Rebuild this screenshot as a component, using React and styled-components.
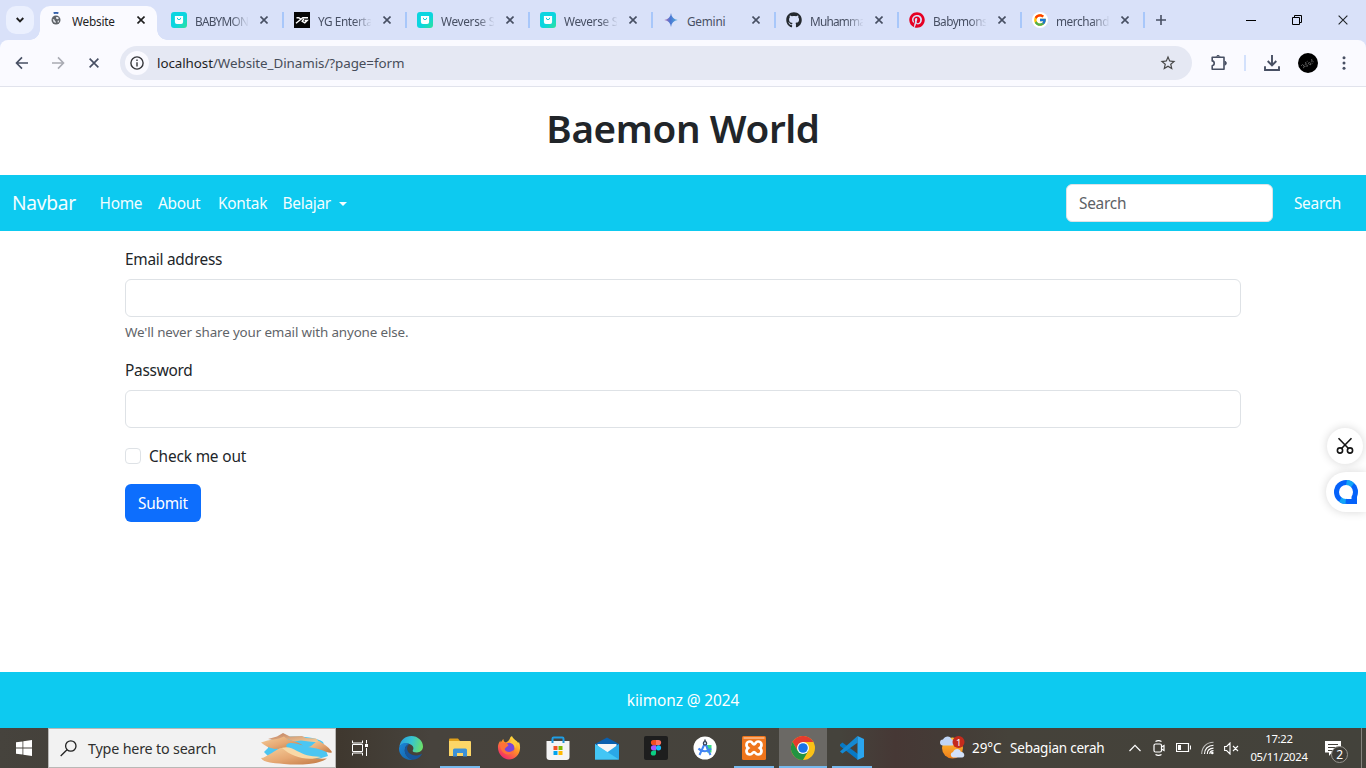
import React from "react";
import styled, { createGlobalStyle, css } from "styled-components";
import { FaGithub, FaPinterest } from "react-icons/fa";
import { FcGoogle } from "react-icons/fc";
import { MdStarBorder } from "react-icons/md";

const GlobalStyle = createGlobalStyle`
  *, *::before, *::after { box-sizing: border-box; }
  html, body { margin: 0; padding: 0; overflow: hidden; background: #fff; }
  body { font-family: "Noto Sans", "Open Sans", sans-serif; font-size: 15.4px; letter-spacing: -0.26px; color: #212529; }
  button, input { font-family: inherit; letter-spacing: inherit; }
  svg { display: block; flex: none; }
`;

const Screen = styled.div`
  width: 1366px;
  height: 768px;
  display: flex;
  flex-direction: column;
  overflow: hidden;
`;

/* ---------- Browser: tab strip ---------- */

const TabStrip = styled.div`
  height: 40px;
  flex: none;
  display: flex;
  background: #d9e1f9;
`;

const TabSearch = styled.button`
  width: 28px;
  height: 28px;
  margin: 6px;
  padding: 0;
  border: 0;
  border-radius: 10px;
  background: #ebf0fe;
  display: flex;
  align-items: center;
  justify-content: center;
`;

const Tab = styled.div`
  position: relative;
  width: 123px;
  height: 40px;
  flex: none;
  display: flex;
  align-items: center;
  padding-left: 8px;
  color: ${(p) => (p.$active ? "#1f1f1f" : "#474f63")};
  isolation: isolate;
  ${(p) =>
    p.$active
      ? css`
          &::before {
            content: "";
            position: absolute;
            z-index: -1;
            left: 0;
            top: 6px;
            width: 117px;
            height: 34px;
            border-radius: 10px 10px 0 0;
            background: #fafaff;
          }
          &::after {
            content: "";
            position: absolute;
            z-index: -1;
            left: -10px;
            bottom: 0;
            width: 137px;
            height: 10px;
            background:
              radial-gradient(circle at 0 0, transparent 9.5px, #fafaff 10px) left / 10px 10px no-repeat,
              radial-gradient(circle at 100% 0, transparent 9.5px, #fafaff 10px) right / 10px 10px no-repeat;
          }
        `
      : css`
          &::after {
            content: "";
            position: absolute;
            left: 119px;
            top: 12px;
            width: 2px;
            height: 16px;
            background: #a8c7fa;
          }
        `}
`;

const Favicon = styled.span`
  width: 16px;
  height: 16px;
  flex: none;
  margin-right: 8px;
`;

const TabTitle = styled.span`
  width: 53px;
  padding-top: 1px;
  font-size: 11.8px;
  line-height: 16px;
  letter-spacing: ${(p) => p.$spacing ?? -0.22}px;
  white-space: nowrap;
  overflow: hidden;
  mask-image: ${(p) => (p.$fade ? "linear-gradient(to right, #000 36px, transparent 54px)" : "none")};
`;

const TabClose = styled.span`
  width: 16px;
  height: 16px;
  margin-left: 8px;
  display: flex;
  align-items: center;
  justify-content: center;
`;

const NewTab = styled.span`
  width: 28px;
  display: flex;
  align-items: center;
  justify-content: center;
  color: #474f63;
`;

const WindowButtons = styled.div`
  margin-left: auto;
  display: flex;
`;

const WindowButton = styled.span`
  width: 46px;
  display: flex;
  align-items: center;
  justify-content: center;
`;

/* ---------- Browser: address row ---------- */

const AddressRowBack = styled.div`
  background: #d9e1f9;
  flex: none;
`;

const AddressRow = styled.div`
  height: 47px;
  display: flex;
  align-items: center;
  border-radius: 8px 8px 0 0;
  background: #fafaff;
  border-bottom: 1px solid #e1e3ec;
  padding: 0 4px;
`;

const NavIcon = styled.span`
  width: 36px;
  height: 34px;
  display: flex;
  align-items: center;
  justify-content: center;
  color: ${(p) => (p.$muted ? "#a9abb3" : "#474f63")};
`;

const Omnibox = styled.div`
  width: 1072px;
  height: 34px;
  margin-left: 8px;
  padding: 0 15px 0 5px;
  border-radius: 17px;
  background: #e5e8f3;
  display: flex;
  align-items: center;
  color: #474747;
`;

const SiteInfo = styled.span`
  width: 24px;
  height: 24px;
  border-radius: 50%;
  background: #fafaff;
  margin-right: 8px;
  display: flex;
  align-items: center;
  justify-content: center;
`;

const Url = styled.span`
  flex: 1;
  font-size: 13.4px;
  line-height: 20px;
  letter-spacing: -0.07px;
  color: #474d59;
  b {
    font-weight: 400;
    color: #1f1f1f;
  }
`;

const ToolbarIcons = styled.div`
  display: flex;
  align-items: center;
  margin-left: 8px;
`;

const ToolbarDivider = styled.span`
  width: 2px;
  height: 16px;
  margin: 0 8px;
  background: #d3e1fc;
`;

/* ---------- Page ---------- */

const Page = styled.main`
  height: 641px;
  flex: none;
  display: flex;
  flex-direction: column;
  background: #fff;
`;

const SiteHeader = styled.header`
  height: 88px;
  padding-top: 17px;
  text-align: center;
`;

const SiteTitle = styled.h1`
  margin: 0;
  font-size: 38.6px;
  line-height: 48px;
  font-weight: 560;
  letter-spacing: -0.36px;
`;

const Navbar = styled.nav`
  height: 56px;
  display: flex;
  align-items: center;
  padding: 0 12px;
  background: #0dcaf0;
  color: #f4fdff;
`;

const Brand = styled.a`
  width: 87.5px;
  font-size: 19.2px;
  line-height: 30px;
`;

const NavLink = styled.a`
  width: ${(p) => p.$width}px;
  flex: none;
  display: flex;
  align-items: center;
  gap: 8px;
  padding-top: 2px;
  line-height: 24px;
  white-space: nowrap;
`;

const Caret = styled.span`
  border: 4.5px solid transparent;
  border-top-color: currentColor;
  border-bottom: 0;
`;

const SearchForm = styled.div`
  margin-left: auto;
  display: flex;
  align-items: center;
`;

const SearchInput = styled.input`
  width: 207px;
  height: 38px;
  padding: 6px 12px;
  border: 1px solid #dee2e6;
  border-radius: 6px;
  background: #fff;
  font-size: 15.4px;
  &::placeholder {
    color: #5c6166;
    opacity: 1;
  }
`;

const SearchButton = styled.button`
  width: 65px;
  margin-left: 12px;
  margin-right: 4px;
  padding: 2px 0 0;
  border: 0;
  background: none;
  color: #f4fdff;
  font-size: 15.4px;
  line-height: 24px;
`;

const Form = styled.form`
  width: 1116px;
  margin: 17px auto 0;
  display: flex;
  flex-direction: column;
`;

const FieldLabel = styled.label`
  line-height: 24px;
  margin-bottom: 7px;
`;

const Field = styled.input`
  height: 38px;
  border: 1px solid #dee2e6;
  border-radius: 6px;
  padding: 6px 12px;
  background: #fff;
`;

const Hint = styled.div`
  margin: 5px 0 16px;
  font-size: 13.4px;
  letter-spacing: -0.14px;
  line-height: 21px;
  color: #5f6469;
`;

const CheckRow = styled.label`
  display: flex;
  align-items: center;
  gap: 8px;
  margin: 16px 0;
  height: 24px;
  line-height: 24px;
  letter-spacing: -0.15px;
  span {
    padding-top: 2px;
  }
`;

const Checkbox = styled.input`
  appearance: none;
  width: 16px;
  height: 16px;
  margin: 0;
  border: 1px solid #dee2e6;
  border-radius: 4px;
`;

const Submit = styled.button`
  align-self: flex-start;
  width: 76px;
  height: 38px;
  padding: 0;
  border: 0;
  border-radius: 6px;
  background: #0d6efd;
  color: #fff;
  font-size: 15.4px;
`;

const SiteFooter = styled.footer`
  height: 56px;
  margin-top: auto;
  background: #0dcaf0;
  color: #fff;
  padding-top: 1px;
  line-height: 56px;
  text-align: center;
  letter-spacing: -0.1px;
`;

/* ---------- Floating extension buttons ---------- */

const FloatingTools = styled.div`
  position: absolute;
  right: 0;
  top: 428px;
  display: flex;
  flex-direction: column;
  align-items: flex-end;
  gap: 8px;
`;

const FloatingButton = styled.div`
  width: ${(p) => (p.$docked ? 40 : 36)}px;
  height: ${(p) => (p.$docked ? 40 : 36)}px;
  margin-right: ${(p) => (p.$docked ? 0 : 3)}px;
  border-radius: ${(p) => (p.$docked ? "20px 0 0 20px" : "50%")};
  background: #fff;
  box-shadow: 0 0 10px rgba(0, 0, 0, 0.16);
  display: flex;
  align-items: center;
  justify-content: center;
`;

/* ---------- Taskbar ---------- */

const Taskbar = styled.div`
  height: 40px;
  flex: none;
  display: flex;
  background: linear-gradient(90deg, #46433d 0, #3f382f 340px, #47433d 430px, #45433c 840px, #463835 895px, #443b36 940px, #45423a 1010px, #43423b 100%);
  color: #fff;
`;

const TaskButton = styled.div`
  width: ${(p) => p.$width || 49}px;
  flex: none;
  position: relative;
  display: flex;
  align-items: center;
  justify-content: center;
`;

const AppButton = styled(TaskButton)`
  background: ${(p) =>
    p.$active ? "linear-gradient(#6b6965, #6b6965) center / 48px 100% no-repeat" : "none"};
  &::after {
    content: "";
    display: ${(p) => (p.$running ? "block" : "none")};
    position: absolute;
    bottom: 0;
    left: ${(p) => (p.$active ? 0.5 : 4.5)}px;
    right: ${(p) => (p.$active ? 0.5 : 4.5)}px;
    height: 2px;
    background: #76b9ed;
  }
`;

const TaskSearch = styled.div`
  width: 288px;
  flex: none;
  padding: 1px 3px 0 11px;
  border: 1px solid #b9b8b6;
  background: #f2f2f2;
  color: #30302f;
  display: flex;
  align-items: center;
  font-size: 14.3px;
  letter-spacing: -0.18px;
  gap: 11px;
  span {
    flex: 1;
    line-height: 20px;
  }
`;

const AppRow = styled.div`
  display: flex;
  margin-left: 2.5px;
`;

const Weather = styled.div`
  display: flex;
  align-items: center;
  margin-left: auto;
  font-size: 13.5px;
  white-space: nowrap;
`;

const Temperature = styled.span`
  width: 38px;
  margin-left: 6px;
  letter-spacing: -0.1px;
`;

const Condition = styled.span`
  width: 113px;
  letter-spacing: -0.22px;
`;

const TrayIcon = styled.div`
  width: 24.2px;
  flex: none;
  display: flex;
  align-items: center;
  justify-content: center;
`;

const Clock = styled.div`
  width: 70px;
  display: flex;
  flex-direction: column;
  align-items: center;
  justify-content: center;
  font-size: 11.3px;
  line-height: 18px;
  letter-spacing: -0.3px;
  padding-bottom: 1px;
`;

const Notifications = styled.div`
  width: 47px;
  padding-right: 9px;
  display: flex;
  align-items: center;
  justify-content: center;
  position: relative;
`;

const Count = styled.span`
  position: absolute;
  left: 17px;
  top: 18px;
  width: 17px;
  height: 17px;
  border-radius: 50%;
  border: 1px solid #97958f;
  background: #3d3b36;
  font-size: 12px;
  line-height: 15px;
  text-align: center;
`;

const ShowDesktop = styled.div`
  width: 5px;
  border-left: 1px solid #85837e;
`;

/* ---------- Icons ---------- */

const Cross = ({ size = 8, stroke = 1.6 }) => (
  <svg width={size} height={size} viewBox="0 0 8 8" fill="none" stroke="currentColor" strokeWidth={stroke}>
    <path d="M.5.5l7 7M7.5.5l-7 7" />
  </svg>
);

const GlobeLoading = () => (
  <svg width="16" height="16" viewBox="0 0 16 16">
    <path d="M5.600 1.300Q8 .2 10.400 1.300" stroke="#2f5ca8" strokeWidth="1.800" fill="none" />
    <circle cx="8" cy="8" r="4.500" fill="#5f6368" />
    <path d="M4.600 6.800l2 .9.300 1.200 1 .8-.3 1.400-2-1zM8 5l2 .1.900 1.300-1.300.8-1.400-.5zM9.600 8.800l1.600-.4-.4 1.700-1 .7z" fill="#e4e6ec" />
  </svg>
);

const WeverseShop = () => (
  <svg width="16" height="16" viewBox="0 0 16 16">
    <defs>
      <linearGradient id="weverse" x1="0" y1="0" x2="1" y2="1">
        <stop offset=".55" stopColor="#0cd5e0" />
        <stop offset="1" stopColor="#2fe39a" />
      </linearGradient>
    </defs>
    <rect width="16" height="16" rx="3" fill="url(#weverse)" />
    <path d="M3.900 4h8.200v6a2 2 0 0 1-2 2H5.900a2 2 0 0 1-2-2z" fill="#fff" />
    <path d="M6.300 5.800a1.700 1.900 0 0 0 3.400 0" fill="none" stroke="#12cfdc" strokeWidth="1" />
  </svg>
);

const YgLogo = () => (
  <svg width="16" height="16" viewBox="0 0 16 16">
    <rect width="16" height="16" fill="#050505" />
    <path d="M2.500 5.800h2.300l2.300 1.600M2 11.200l6.800-5.400H14M9.800 7L8.200 9.300l2.600 1.500 2.400-2.300h-2.600" fill="none" stroke="#fff" strokeWidth="1.400" />
  </svg>
);

const GeminiStar = () => (
  <svg width="16" height="16" viewBox="0 0 16 16">
    <defs>
      <linearGradient id="gemini" x1="0" y1="0" x2="1" y2="0">
        <stop stopColor="#b56fae" />
        <stop offset=".45" stopColor="#4a76d4" />
        <stop offset="1" stopColor="#55afd8" />
      </linearGradient>
    </defs>
    <path d="M8 1c.5 4 2.700 6.300 6.800 7-4.100.7-6.300 3-6.800 7-.5-4-2.700-6.300-6.800-7C5.300 7.300 7.500 5 8 1z" fill="url(#gemini)" />
  </svg>
);

const GoogleIcon = () => (
  <svg width="16" height="16" viewBox="0 0 16 16">
    <circle cx="8" cy="8" r="8" fill="#fff" />
    <FcGoogle x="1" y="1" size={14} />
  </svg>
);

const Arrow = ({ flip }) => (
  <svg width="14" height="14" viewBox="0 0 14 14" fill="none" stroke="currentColor" strokeWidth="1.600">
    <path d={flip ? "M1 7h11M7 1.400L12.500 7 7 12.600" : "M13 7H2M7 1.400L1.500 7 7 12.600"} />
  </svg>
);

const InfoIcon = () => (
  <svg width="14" height="14" viewBox="0 0 14 14" fill="none" stroke="#35363a" strokeWidth="1.400">
    <circle cx="7" cy="7" r="6.100" />
    <path d="M7 6.200v4.200M7 3.600V5" />
  </svg>
);

const PuzzleIcon = () => (
  <svg width="18" height="18" viewBox="0 0 18 18" fill="none" stroke="currentColor" strokeWidth="1.600" strokeLinejoin="round">
    <path d="M3.200 3.200H15v12H3.200v-3.500c2.700-.4 2.700-4.400 0-4.800z" />
    <path d="M7.300 2.500a1.900 1.500 0 0 1 3.600 0M15.700 7.300a1.600 1.900 0 0 1 0 3.800" fill="currentColor" strokeWidth="1" />
  </svg>
);

const DownloadIcon = () => (
  <svg width="16" height="16" viewBox="0 0 16 16" fill="none" stroke="currentColor" strokeWidth="1.900">
    <path d="M8 0v10M3.700 6L8 10.300 12.300 6M1 11.200V15h14v-3.800" />
  </svg>
);

const ProfilePicture = () => (
  <svg width="20" height="20" viewBox="0 0 20 20">
    <circle cx="10" cy="10" r="10" fill="#000" />
    <path d="M3 13l2-2 1 3 2-4 1 4 2-5 1 3 2-5 2 3M5 15l3-2M7 10l3-2M12 12l3-2M13 7l2-1" fill="none" stroke="#888" strokeWidth=".8" strokeDasharray="1 1" />
  </svg>
);

const DotsIcon = () => (
  <svg width="4" height="14" viewBox="0 0 4 14" fill="currentColor">
    <circle cx="2" cy="1.700" r="1.500" />
    <circle cx="2" cy="7" r="1.500" />
    <circle cx="2" cy="12.300" r="1.500" />
  </svg>
);

const ScissorsIcon = () => (
  <svg width="18" height="18" viewBox="0 0 18 18" fill="none" stroke="#161616" strokeWidth="1.600">
    <circle cx="4" cy="13.500" r="2.600" />
    <circle cx="14" cy="13.500" r="2.600" />
    <path d="M2.500 1.200l10 10.300M15.500 1.200l-10 10.300" />
  </svg>
);

const AssistantIcon = () => (
  <svg width="26" height="26" viewBox="0 0 26 26">
    <path d="M14 13h10v12H14z" fill="#0562fa" />
    <circle cx="13" cy="13" r="12" fill="#0562fa" />
    <path d="M14 1q5 .3 7 3.300l-3.500 4.700L13 6z" fill="#12a5f7" />
    <path d="M6 22.800q3 2.200 6.500 2.200l.5-6-4-1z" fill="#12a5f7" />
    <circle cx="13" cy="13" r="7" fill="#fff" />
    <path d="M14 16h4.500v4H14z" fill="#fff" />
  </svg>
);

const WindowsIcon = () => (
  <svg width="16" height="16" viewBox="0 0 16 16" fill="#fff">
    <path d="M0 2.300L6.500 1.400v6.200H0zM7.300 1.300L16 0v7.600H7.300zM0 8.400h6.500v6.200L0 13.700zM7.300 8.400H16V16l-8.700-1.300z" />
  </svg>
);

const MagnifierIcon = () => (
  <svg width="17" height="17" viewBox="0 0 17 17" fill="none" stroke="#222" strokeWidth="1.300">
    <circle cx="10.800" cy="6" r="5.200" />
    <path d="M7 9.800L.7 16" />
  </svg>
);

const DunesIcon = () => (
  <svg width="72" height="34" viewBox="0 0 72 34">
    <defs>
      <linearGradient id="sand" x1="0" y1="0" x2="1" y2="1">
        <stop stopColor="#f6cf9b" />
        <stop offset=".5" stopColor="#e6a873" />
        <stop offset="1" stopColor="#bd753f" />
      </linearGradient>
      <linearGradient id="ridge" x1="0" y1="0" x2="1" y2="1">
        <stop stopColor="#c08062" />
        <stop offset="1" stopColor="#f7d29c" />
      </linearGradient>
    </defs>
    <path d="M9 9C20 3 52 3 63 10l5 14-16 5-42-3-6-6 4-4z" fill="#4cc6f2" />
    <path d="M8 7L17 4.500 23 1l7 3.500L42 4l4 2 10 .5 4 4-11-1-8-1-7 1-8-3-10 2z" fill="url(#ridge)" />
    <path d="M1 10.500c9-3.500 17-2.500 23-6 4 5 13 4 19 9-6-2-10-3-15-2-5 3 3 5-3 6.500-5 1.500-4-2-10-1C9 16 5 14 1 10.500z" fill="url(#sand)" />
    <path d="M1 26c3 0 5-2 9-4 6-3 10-7 14-6 9 1 20 12 43 10.500-8 6-28 7-43 5.500C14 31 4 31 1 26z" fill="url(#sand)" />
    <path d="M48 15c5 0 6-6 11-6 5 3 12 8 13 11.500-6 1-9-4-24-5.500z" fill="url(#sand)" />
    <path d="M22 16c5-2 10 0 15 3 8 4 11 5 24 6-14 4.500-29 0-39-9z" fill="#f9d9a7" />
  </svg>
);

const TaskViewIcon = () => (
  <svg width="17" height="16" viewBox="0 0 17 16" fill="none" stroke="#fff">
    <path d="M.5.5v2.500h10V.5M.5 15.500V13h10v2.500M.5 4.500h10v7H.5zM14.500 0v3.500M14.500 8v8" />
    <path d="M13 4h3v3h-3z" fill="#fff" stroke="none" />
  </svg>
);

const EdgeIcon = () => (
  <svg width="24" height="24" viewBox="0 0 24 24">
    <defs>
      <linearGradient id="edgeTop" x1="0" y1=".3" x2="1" y2=".5">
        <stop stopColor="#2a9fe0" />
        <stop offset=".5" stopColor="#36c4d0" />
        <stop offset="1" stopColor="#6be06a" />
      </linearGradient>
      <linearGradient id="edgeBody" x1="0" y1="0" x2="1" y2="1">
        <stop stopColor="#1b87d8" />
        <stop offset="1" stopColor="#1460a5" />
      </linearGradient>
    </defs>
    <path d="M.4 10.500C1.500 4 6.500 0 12.300 0 19 0 24 5 24 10.600c0 3.700-2.800 5.800-6.100 5.800-3.100 0-4.600-1-4.200-2 2-2.400-.2-5.600-3.200-6.400C6.800 7 2.600 8 .4 10.500z" fill="url(#edgeTop)" />
    <path d="M0 12.500C.5 7.500 6 5.800 10.500 8c-3.500.6-5 3.600-4.700 7 .4 4 3.700 7.500 8.200 8.700C6.500 25.300-.2 19.500 0 12.500z" fill="url(#edgeBody)" />
    <path d="M10.600 8.200c-4 2.300-2.600 7.600.6 9.600 3.500 2.200 8 2 11 .1.500-.2.800.2.500.7-2 3.300-5.300 5.200-8.700 5.100-4.500-1.200-8-4.700-8.200-8.700-.2-3.500 1.500-6.100 4.800-6.800z" fill="#17559b" />
  </svg>
);

const ExplorerIcon = () => (
  <svg width="22" height="20" viewBox="0 0 22 20">
    <path d="M0 1.500Q0 .5 1 .5h8l2 2.500H0z" fill="#e0a01b" />
    <path d="M0 3h21q1 0 1 1v14H0z" fill="#fcd667" />
    <path d="M4 18.500V12q0-1.500 1.500-1.500h11Q18 10.500 18 12v6.500h-4V15H8v3.500z" fill="#3c91d6" />
  </svg>
);

const FirefoxIcon = () => (
  <svg width="24" height="24" viewBox="0 0 24 24">
    <defs>
      <linearGradient id="fox" x1=".8" y1=".1" x2=".25" y2=".9">
        <stop stopColor="#ffe33f" />
        <stop offset=".45" stopColor="#ff9028" />
        <stop offset="1" stopColor="#f32f67" />
      </linearGradient>
    </defs>
    <path d="M1 10c.3-2.300 1.200-4 2.500-5.500v2C5 5 5.500 3.500 6.500 3c-.2 2 .8 3 2.300 3.500C11 5.700 12.500 4 13.500 1c.7-.5 1.200-.6 1.500-1 .5 3 6 5 6 7l1-1c1 2.500 1.200 4.800 1 7-.6 6-5.300 10.500-11 10.500S.3 18 1 10z" fill="url(#fox)" />
    <circle cx="12.300" cy="12" r="5.200" fill="#7a45d8" />
    <path d="M3 8c3-2.500 7-1.500 8.500 1.500L9.500 11 7.500 13c1 3.500 7 4 9.500.5-.5 5-7 6.500-10.700 3C4 14.500 3 11.500 3 8z" fill="#ff7139" />
    <path d="M13 7c3 0 5 2.500 4.800 5.500C20 10 19 5 15 3.500z" fill="#ffc83a" />
  </svg>
);

const StoreIcon = () => (
  <svg width="24" height="24" viewBox="0 0 24 24">
    <path d="M6.500 7V2.700q0-1.200 1.200-1.200h8.600q1.200 0 1.200 1.200V7" fill="none" stroke="#1f9ee4" strokeWidth="2" />
    <path d="M.5 5h23v16q0 3-3 3h-17q-3 0-3-3z" fill="#f4f4f4" />
    <path d="M6.500 5v2M17.500 5v2" stroke="#2196d8" strokeWidth="2" />
    <path d="M7.500 10h4v4h-4z" fill="#f25022" />
    <path d="M12.500 10h4v4h-4z" fill="#7fba00" />
    <path d="M7.500 15h4v4h-4z" fill="#00a4ef" />
    <path d="M12.500 15h4v4h-4z" fill="#ffb900" />
  </svg>
);

const MailIcon = () => (
  <svg width="24" height="23" viewBox="0 0 24 23">
    <path d="M0 7L12 .5 24 7v4H0z" fill="#0a5fad" />
    <path d="M2.500 7h19v9h-19z" fill="#f5f5f5" />
    <path d="M0 7l12 8.500L24 7v15.500H0z" fill="#2aa8e8" />
    <path d="M0 7l24 15.500H0z" fill="#43c6f5" />
  </svg>
);

const FigmaIcon = () => (
  <svg width="24" height="24" viewBox="0 0 24 24">
    <rect width="24" height="24" rx="2" fill="#1e1e1e" />
    <path d="M12 4H9.500a2.500 2.500 0 0 0 0 5.200H12z" fill="#f24e1e" />
    <path d="M12 4h2.500a2.500 2.500 0 0 1 0 5.200H12z" fill="#ff7262" />
    <path d="M12 9.200H9.500a2.500 2.500 0 0 0 0 5.200H12z" fill="#a259ff" />
    <circle cx="14.500" cy="11.800" r="2.600" fill="#1abcfe" />
    <path d="M12 14.400H9.500a2.600 2.600 0 1 0 2.500 2.600z" fill="#0acf83" />
  </svg>
);

const AndroidStudioIcon = () => (
  <svg width="24" height="24" viewBox="0 0 24 24">
    <circle cx="12" cy="12" r="11.500" fill="#fff" />
    <path d="M13 9h5.500v7.500H14z" fill="#3ddc84" />
    <path d="M12 7L6.500 19M12 7l5.500 12M5.500 12.500c3 3.500 10 3.500 12.500 0" fill="none" stroke="#4285f4" strokeWidth="2" />
    <path d="M12 3.500V6" stroke="#333f50" strokeWidth="1.500" />
    <circle cx="12" cy="7.300" r="1.700" fill="#d7e6fb" stroke="#333f50" strokeWidth="1.200" />
  </svg>
);

const XamppIcon = () => (
  <svg width="24" height="24" viewBox="0 0 24 24">
    <rect width="24" height="24" rx="1.500" fill="#ef751b" />
    <path d="M1.500 1h21v2h-21z" fill="#f7ab72" />
    <path d="M8 5.500c-4 0-4.500 4.500-1.800 6.500-2.700 2-2.200 6.500 1.800 6.500 2.500 0 2.500-2.500 4-2.500s1.500 2.500 4 2.500c4 0 4.500-4.500 1.800-6.500 2.700-2 2.200-6.500-1.800-6.500-2.500 0-2.500 3-4 3s-1.500-3-4-3z" fill="none" stroke="#fff" strokeWidth="2.700" />
  </svg>
);

const ChromeIcon = () => (
  <svg width="24" height="24" viewBox="0 0 24 24">
    <circle cx="12" cy="12" r="12" fill="#fbc116" />
    <path d="M1.600 6A12 12 0 0 1 22.400 6H12L6.800 15z" fill="#e33b2e" />
    <path d="M1.600 6A12 12 0 0 0 12 24l5.200-9H6.800z" fill="#229342" />
    <circle cx="12" cy="12" r="6" fill="#fff" />
    <circle cx="12" cy="12" r="4.800" fill="#1a73e8" />
  </svg>
);

const VsCodeIcon = () => (
  <svg width="24" height="24" viewBox="0 0 24 24">
    <path d="M0 8.500L2.400 6.400 18 18v6L0 10z" fill="#0879c5" />
    <path d="M17.500 0v6.700L2.400 17.600 0 15.500z" fill="#1489d3" />
    <path d="M17.500 0L24 3v18l-6.500 3z" fill="#2aa5ef" />
  </svg>
);

const WeatherIcon = () => (
  <svg width="26" height="24" viewBox="0 0 26 24">
    <defs>
      <linearGradient id="sun" x1="0" y1="0" x2="0" y2="1">
        <stop stopColor="#ffc338" />
        <stop offset="1" stopColor="#f07d19" />
      </linearGradient>
    </defs>
    <circle cx="12.500" cy="12" r="10.500" fill="url(#sun)" />
    <path d="M3 9.500a3 3 0 0 1 0-6C5-.7 11-.3 11.500 3.500a3 3 0 0 1 1 6z" fill="#c0d5f6" />
    <path d="M13 21.500a2.800 2.800 0 0 1 0-5.500c1.500-4 7-4 7.800-.2 4 .1 4.800 5.700 1.200 5.700z" fill="#d3e1fa" />
    <circle cx="18.500" cy="6" r="6" fill="#c42b1c" />
    <text x="18.500" y="9.500" fontSize="9.500" textAnchor="middle" fill="#fff">1</text>
  </svg>
);

const ChevronUpIcon = () => (
  <svg width="12" height="8" viewBox="0 0 12 8" fill="none" stroke="#fff" strokeWidth="1.200">
    <path d="M.5 7L6 1.300 11.500 7" />
  </svg>
);

const MeetNowIcon = () => (
  <svg width="12" height="16" viewBox="0 0 12 16" fill="none" stroke="#fff" strokeWidth="1.200">
    <rect x="1" y="4" width="7.500" height="8" rx="1.500" />
    <path d="M8.500 7l2.500-1.500v5L8.500 9M2.500 1.500Q5.500-.3 8.500 1.500M2.500 14.500Q5.500 16.300 8.500 14.500" />
  </svg>
);

const BatteryIcon = () => (
  <svg width="15" height="10" viewBox="0 0 15 10" fill="none" stroke="#fff">
    <path d="M.5.5h12v8H.5z" strokeWidth="1.200" />
    <path d="M14.500 2.500v4" />
    <path d="M2 2h3v5H2z" fill="#fff" stroke="none" />
  </svg>
);

const WifiIcon = () => (
  <svg width="13" height="14" viewBox="0 0 13 14" fill="none" stroke="#fff" strokeWidth="1.100">
    <path d="M.7 13C.7 6 5.500 1.500 12.500 1.300" opacity=".65" />
    <path d="M3.500 13c0-5 3.500-8.700 9-8.800M6.300 13c0-3.500 2.500-5.800 6.200-5.900M8.800 13c0-2 1.500-3.300 3.700-3.400" />
    <circle cx="11.300" cy="12" r="1.300" fill="#fff" stroke="none" />
  </svg>
);

const MutedIcon = () => (
  <svg width="15" height="13" viewBox="0 0 15 13" fill="none" stroke="#fff" strokeWidth="1.100">
    <path d="M.6 4.500h2L6 1v11L2.600 8.500h-2zM9 4l5 5M14 4L9 9" />
  </svg>
);

const MessageIcon = () => (
  <svg width="16" height="15" viewBox="0 0 16 15">
    <path d="M0 0h16v11.500H7L4 15v-3.500H0z" fill="#fff" />
    <path d="M3 3.500h10M3 6.500h10M3 9.500h7" stroke="#45423c" />
  </svg>
);

/* ---------- Data ---------- */

const tabs = [
  { title: "Website", icon: <GlobeLoading />, active: true },
  { title: "BABYMON", icon: <WeverseShop />, fade: true, spacing: -0.75 },
  { title: "YG Enterta", icon: <YgLogo />, fade: true, spacing: -0.42 },
  { title: "Weverse S", icon: <WeverseShop />, fade: true, spacing: -0.3 },
  { title: "Weverse S", icon: <WeverseShop />, fade: true, spacing: -0.3 },
  { title: "Gemini", icon: <GeminiStar /> },
  { title: "Muhamma", icon: <FaGithub size={16} color="#24292f" />, fade: true, spacing: -0.78 },
  { title: "Babymons", icon: <FaPinterest size={16} color="#e60023" />, fade: true, spacing: -0.55 },
  { title: "merchand", icon: <GoogleIcon />, fade: true, spacing: -0.42 },
];

const links = [
  { label: "Home", width: 58.5 },
  { label: "About", width: 60 },
  { label: "Kontak", width: 64.5 },
  { label: "Belajar", width: 72, menu: true },
];

const apps = [
  { Icon: EdgeIcon },
  { Icon: ExplorerIcon, running: true },
  { Icon: FirefoxIcon },
  { Icon: StoreIcon },
  { Icon: MailIcon },
  { Icon: FigmaIcon },
  { Icon: AndroidStudioIcon },
  { Icon: XamppIcon, running: true },
  { Icon: ChromeIcon, running: true, active: true },
  { Icon: VsCodeIcon, running: true },
];

const trayIcons = [ChevronUpIcon, MeetNowIcon, BatteryIcon, WifiIcon, MutedIcon];

export default function App() {
  return (
    <Screen>
      <GlobalStyle />
      <TabStrip>
        <TabSearch>
          <svg width="8" height="6" viewBox="0 0 8 6" fill="none" stroke="#1f1f1f" strokeWidth="1.900">
            <path d="M.7 1L4 4.300 7.300 1" />
          </svg>
        </TabSearch>
        {tabs.map((t, i) => (
          <Tab key={i} $active={t.active}>
            <Favicon>{t.icon}</Favicon>
            <TabTitle $fade={t.fade} $spacing={t.spacing}>{t.title}</TabTitle>
            <TabClose><Cross /></TabClose>
          </Tab>
        ))}
        <NewTab>
          <svg width="10" height="10" viewBox="0 0 10 10" stroke="currentColor" strokeWidth="1.600">
            <path d="M5 0v10M0 5h10" />
          </svg>
        </NewTab>
        <WindowButtons>
          <WindowButton>
            <svg width="10" height="1" viewBox="0 0 10 1"><path d="M0 0h10v1H0z" /></svg>
          </WindowButton>
          <WindowButton>
            <svg width="10" height="10" viewBox="0 0 10 10" fill="none" stroke="#000">
              <path d="M.5 2.500h7v7h-7zM2.500 2.500v-2h7v7h-2" />
            </svg>
          </WindowButton>
          <WindowButton><Cross size={10} stroke={0.9} /></WindowButton>
        </WindowButtons>
      </TabStrip>

      <AddressRowBack>
        <AddressRow>
          <NavIcon><Arrow /></NavIcon>
          <NavIcon $muted><Arrow flip /></NavIcon>
          <NavIcon><Cross size={10} stroke={1.300} /></NavIcon>
          <Omnibox>
            <SiteInfo><InfoIcon /></SiteInfo>
            <Url><b>localhost</b>/Website_Dinamis/?page=form</Url>
            <MdStarBorder size={18} />
          </Omnibox>
          <ToolbarIcons>
            <NavIcon><PuzzleIcon /></NavIcon>
            <ToolbarDivider />
            <NavIcon><DownloadIcon /></NavIcon>
            <NavIcon><ProfilePicture /></NavIcon>
            <NavIcon><DotsIcon /></NavIcon>
          </ToolbarIcons>
        </AddressRow>
      </AddressRowBack>

      <Page>
        <SiteHeader><SiteTitle>Baemon World</SiteTitle></SiteHeader>
        <Navbar>
          <Brand>Navbar</Brand>
          {links.map((l) => (
            <NavLink key={l.label} $width={l.width}>
              {l.label}
              {l.menu && <Caret />}
            </NavLink>
          ))}
          <SearchForm>
            <SearchInput placeholder="Search" />
            <SearchButton>Search</SearchButton>
          </SearchForm>
        </Navbar>
        <Form onSubmit={(e) => e.preventDefault()}>
          <FieldLabel>Email address</FieldLabel>
          <Field type="email" />
          <Hint>We'll never share your email with anyone else.</Hint>
          <FieldLabel>Password</FieldLabel>
          <Field type="password" />
          <CheckRow>
            <Checkbox type="checkbox" />
            <span>Check me out</span>
          </CheckRow>
          <Submit>Submit</Submit>
        </Form>
        <SiteFooter>kiimonz @ 2024</SiteFooter>
      </Page>

      <FloatingTools>
        <FloatingButton><ScissorsIcon /></FloatingButton>
        <FloatingButton $docked><AssistantIcon /></FloatingButton>
      </FloatingTools>

      <Taskbar>
        <TaskButton $width={48}><WindowsIcon /></TaskButton>
        <TaskSearch>
          <MagnifierIcon />
          <span>Type here to search</span>
          <DunesIcon />
        </TaskSearch>
        <TaskButton $width={48}><TaskViewIcon /></TaskButton>
        <AppRow>
          {apps.map(({ Icon, running, active }, i) => (
            <AppButton key={i} $running={running} $active={active}><Icon /></AppButton>
          ))}
        </AppRow>
        <Weather>
          <WeatherIcon />
          <Temperature>29°C</Temperature>
          <Condition>Sebagian cerah</Condition>
        </Weather>
        {trayIcons.map((Icon, i) => (
          <TrayIcon key={i}><Icon /></TrayIcon>
        ))}
        <Clock>
          <span>17:22</span>
          <span>05/11/2024</span>
        </Clock>
        <Notifications>
          <MessageIcon />
          <Count>2</Count>
        </Notifications>
        <ShowDesktop />
      </Taskbar>
    </Screen>
  );
}
